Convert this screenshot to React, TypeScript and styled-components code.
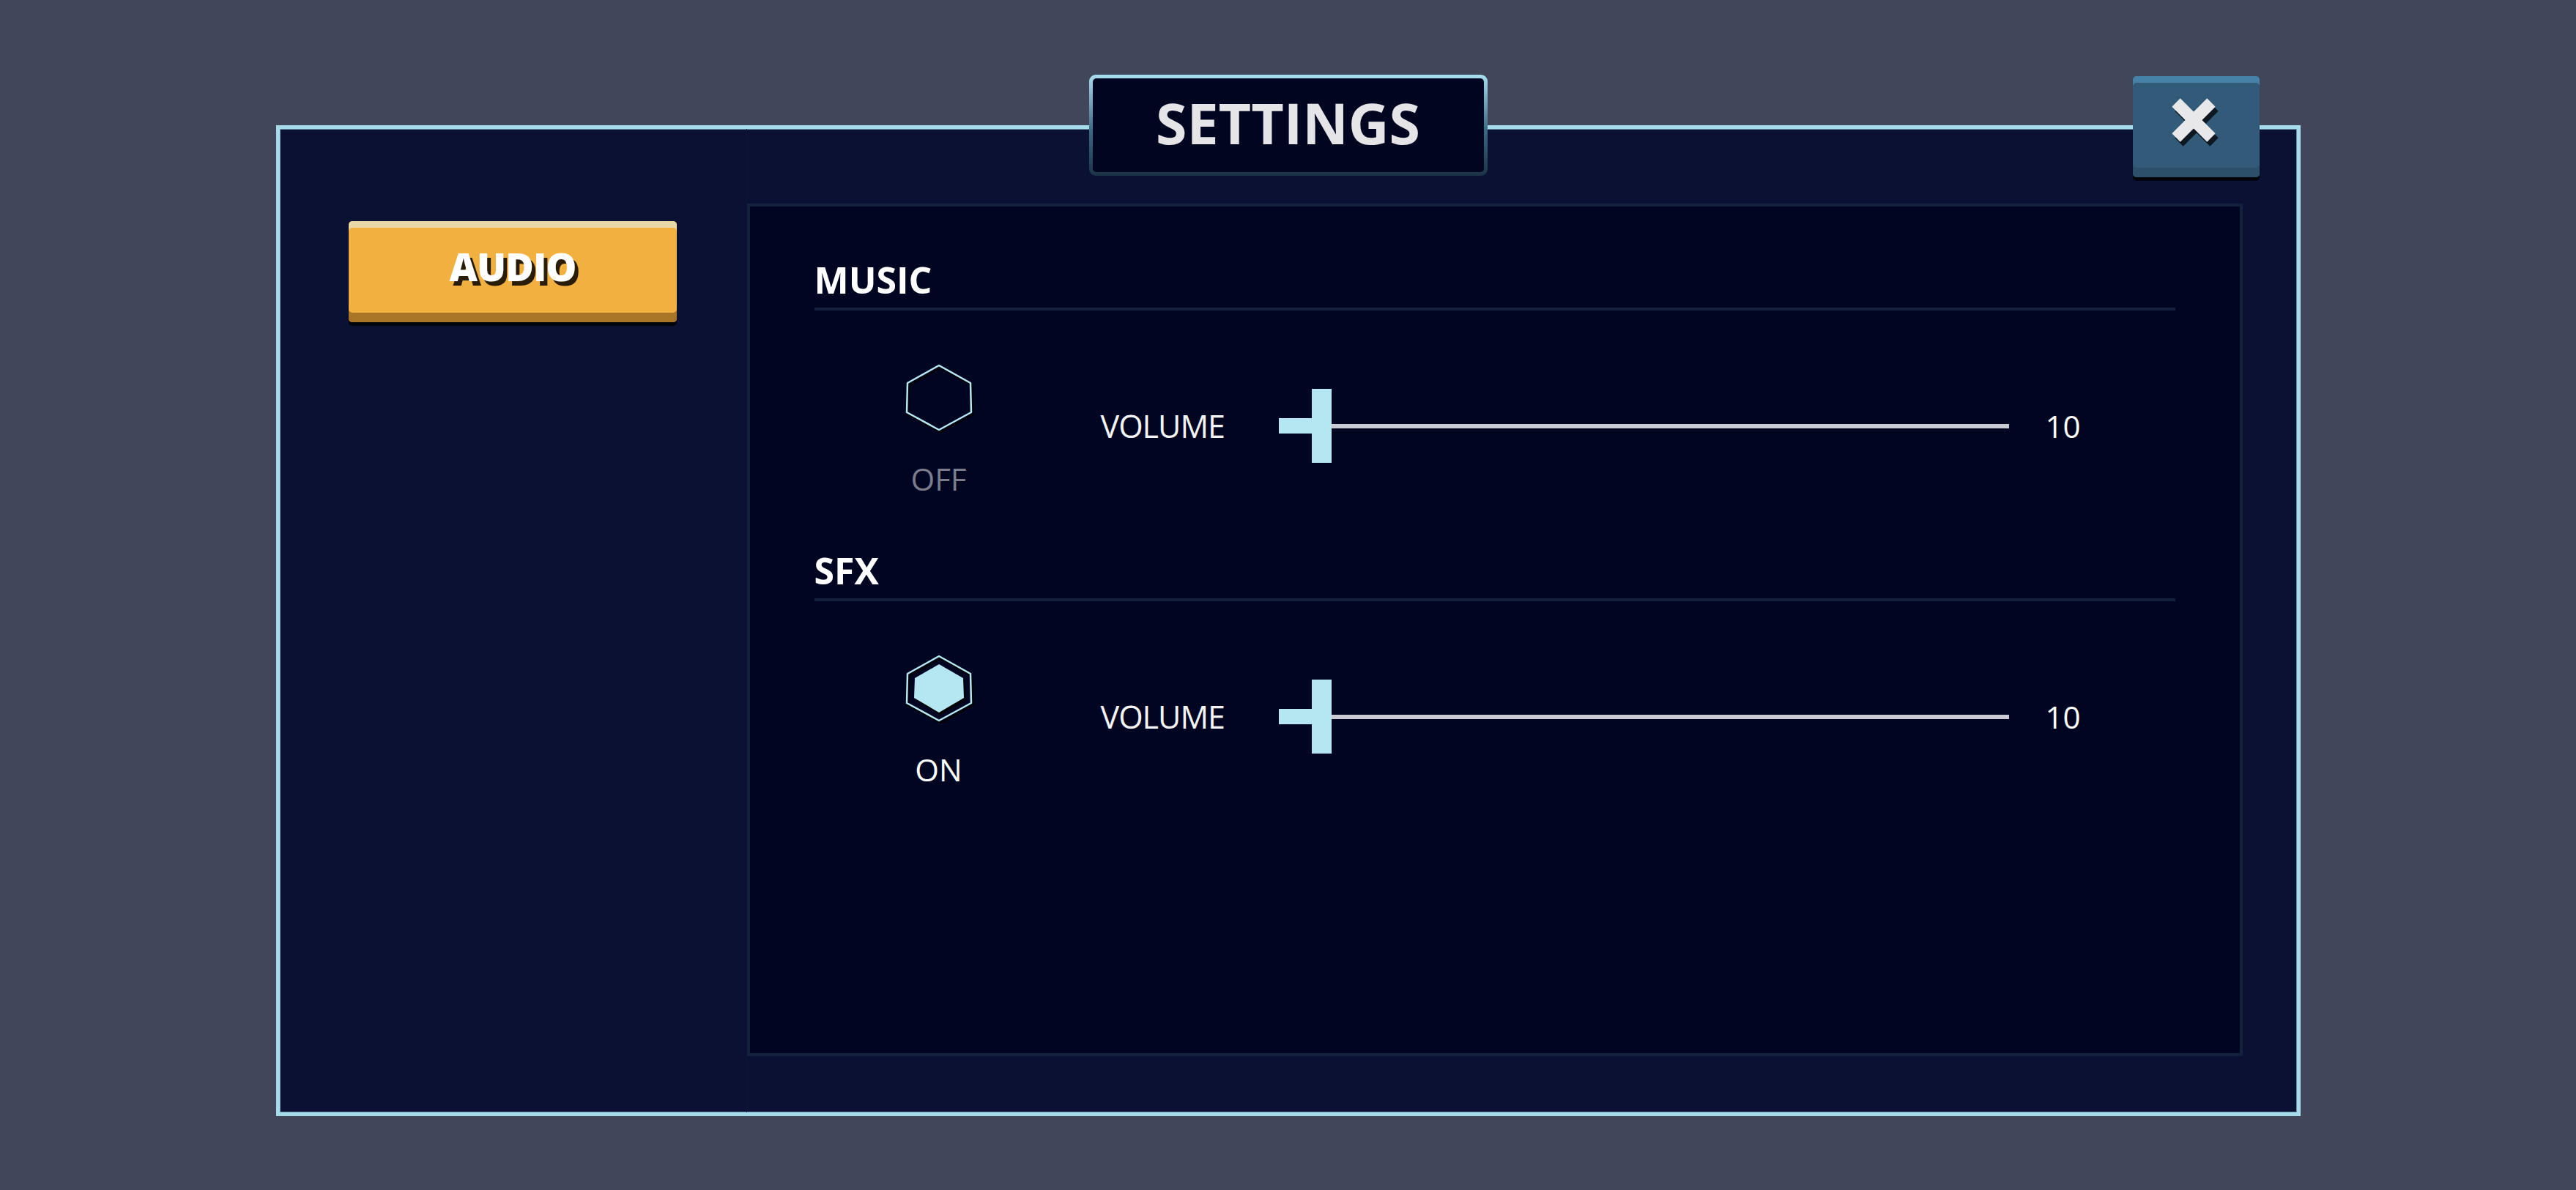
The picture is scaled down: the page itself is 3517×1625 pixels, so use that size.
import styled, { createGlobalStyle } from "styled-components";

const GlobalStyle = createGlobalStyle`
  html, body {
    margin: 0;
    padding: 0;
  }

  body {
    background: #41465b;
    font-family: "Open Sans", "Noto Sans", sans-serif;
  }
`;

const CYAN = "#b4e7f1";

type Tone = "gold" | "steel";

const tones: Record<Tone, { face: string; top: string; bottom: string }> = {
    gold: { face: "#f2b03e", top: "#e9d7a5", bottom: "#a87425" },
    steel: { face: "#325b7a", top: "#4681a7", bottom: "#2c5069" },
};

interface AudioSection {
    title: string;
    on: boolean;
    volume: number;
}

const sections: AudioSection[] = [
    { title: "MUSIC", on: false, volume: 10 },
    { title: "SFX", on: true, volume: 10 },
];

const HexToggle = ({ on }: { on: boolean }) => (
    <HexIcon viewBox="0 0 92 92" width={92} height={92}>
        <polygon
            points="46,2 89,26 90,66 46,90 2,66 3,26"
            fill="none"
            stroke={CYAN}
            strokeWidth={2.5}
            strokeLinejoin="round"
        />
        {on && (
            <polygon
                points="46,13 79,32 80,59 46,79 12,59 13,32"
                fill={CYAN}
            />
        )}
    </HexIcon>
);

const CloseIcon = () => (
    <svg viewBox="0 0 76 76" width={76} height={76}>
        <g stroke="#0e1820" strokeWidth={16}>
            <line x1={15} y1={17} x2={63} y2={65} />
            <line x1={63} y1={17} x2={15} y2={65} />
        </g>
        <g stroke="#e8e8ea" strokeWidth={16}>
            <line x1={11} y1={11} x2={59} y2={59} />
            <line x1={59} y1={11} x2={11} y2={59} />
        </g>
    </svg>
);

const App = () => {
    return (
        <Page>
            <GlobalStyle />
            <Frame>
                <TitleTab>
                    <TitleInner>SETTINGS</TitleInner>
                </TitleTab>
                <CloseButton $tone="steel" aria-label="Close">
                    <CloseIcon />
                </CloseButton>

                <Sidebar>
                    <TabButton $tone="gold">AUDIO</TabButton>
                </Sidebar>

                <Content>
                    <Panel>
                        {sections.map((s) => (
                            <Section key={s.title}>
                                <Heading>{s.title}</Heading>
                                <Row>
                                    <ToggleColumn>
                                        <HexToggle on={s.on} />
                                        <ToggleLabel $on={s.on}>
                                            {s.on ? "ON" : "OFF"}
                                        </ToggleLabel>
                                    </ToggleColumn>
                                    <Controls>
                                        <VolumeLabel>VOLUME</VolumeLabel>
                                        <Slider>
                                            <SliderFill />
                                            <SliderThumb />
                                            <SliderTrack />
                                        </Slider>
                                        <Value>{s.volume}</Value>
                                    </Controls>
                                </Row>
                            </Section>
                        ))}
                    </Panel>
                </Content>
            </Frame>
        </Page>
    );
};

export default App;

const Page = styled.div`
    box-sizing: border-box;
    width: 100%;
    min-height: 100vh;
    padding-top: 171px;
`;

const Frame = styled.div`
    position: relative;
    box-sizing: border-box;
    display: flex;
    width: 2764px;
    height: 1353px;
    margin: 0 auto;
    background: #0b1132;
    border: 5px solid #a6dbea;
    box-shadow: inset 0 0 0 1px #6f93a6;
`;

const TitleTab = styled.div`
    position: absolute;
    top: -74px;
    left: 50%;
    transform: translateX(-50%);
    box-sizing: border-box;
    width: 544px;
    height: 138px;
    padding: 5px;
    border-radius: 9px;
    background: linear-gradient(180deg, #a8def0 0%, #3b6a85 55%, #1b3344 100%);
`;

const TitleInner = styled.div`
    box-sizing: border-box;
    display: flex;
    align-items: center;
    justify-content: center;
    height: 100%;
    padding-bottom: 8px;
    border-radius: 5px;
    background: #000520;
    color: #e5e5e7;
    font-family: "Open Sans", sans-serif;
    font-size: 77px;
    font-weight: 700;
    line-height: 77px;
`;

const GameButton = styled.button<{ $tone: Tone }>`
    box-sizing: border-box;
    display: flex;
    align-items: center;
    justify-content: center;
    padding: 0;
    border: none;
    border-radius: 5px;
    cursor: pointer;
    background: ${({ $tone }) => tones[$tone].face};
    box-shadow:
        inset 0 9px 0 ${({ $tone }) => tones[$tone].top},
        inset 0 -13px 0 ${({ $tone }) => tones[$tone].bottom},
        0 5px 0 #03050c;
`;

const CloseButton = styled(GameButton)`
    position: absolute;
    top: -72px;
    right: 51px;
    width: 173px;
    height: 138px;
    padding-bottom: 13px;
`;

const TabButton = styled(GameButton)`
    width: 448px;
    height: 138px;
    padding-bottom: 16px;
    color: #ffffff;
    font-family: "Open Sans", sans-serif;
    font-size: 53px;
    font-weight: 800;
    line-height: 53px;
    letter-spacing: -1px;
    text-shadow: 5px 6px 0 #2a1d07;
`;

const Sidebar = styled.nav`
    box-sizing: border-box;
    display: flex;
    flex-direction: column;
    align-items: center;
    flex-shrink: 0;
    width: 638px;
    padding-top: 126px;
    border-right: 1px solid #0d1536;
`;

const Content = styled.main`
    display: flex;
    flex: 1;
    padding: 102px 74px 77px 0;
`;

const Panel = styled.section`
    box-sizing: border-box;
    flex: 1;
    padding: 75px 88px 0;
    background: #000622;
    border: 4px solid #14213d;
`;

const Section = styled.div`
    & + & {
        margin-top: 79px;
    }
`;

const Heading = styled.h2`
    margin: 0;
    padding-bottom: 13px;
    border-bottom: 4px solid #14213e;
    color: #ffffff;
    font-family: "Open Sans", sans-serif;
    font-size: 50px;
    font-weight: 700;
    line-height: 50px;
`;

const Row = styled.div`
    display: flex;
    align-items: flex-start;
    padding-top: 73px;
`;

const ToggleColumn = styled.div`
    display: flex;
    flex-direction: column;
    align-items: center;
    gap: 44px;
    width: 92px;
    margin-left: 124px;
`;

const HexIcon = styled.svg`
    display: block;
    overflow: visible;
    filter: drop-shadow(2px 3px 0 #000000);
`;

const ToggleLabel = styled.span<{ $on: boolean }>`
    color: ${({ $on }) => ($on ? "#ffffff" : "#7b7d8d")};
    font-family: "Open Sans", sans-serif;
    font-size: 42px;
    line-height: 42px;
    white-space: nowrap;
`;

const Controls = styled.div`
    display: flex;
    align-items: center;
    height: 101px;
    margin-top: 34px;
    margin-left: 175px;
`;

const VolumeLabel = styled.span`
    width: 243px;
    color: #f4f4f6;
    font-family: "Open Sans", sans-serif;
    font-size: 43px;
    line-height: 43px;
    letter-spacing: -1px;
`;

const Slider = styled.div`
    display: flex;
    align-items: center;
    width: 997px;
    height: 101px;
`;

const SliderFill = styled.div`
    width: 45px;
    height: 21px;
    background: ${CYAN};
`;

const SliderThumb = styled.div`
    width: 27px;
    height: 101px;
    background: ${CYAN};
`;

const SliderTrack = styled.div`
    flex: 1;
    height: 6px;
    background: #c9cad4;
`;

const Value = styled.span`
    margin-left: 50px;
    color: #ffffff;
    font-family: "Open Sans", sans-serif;
    font-size: 42px;
    line-height: 42px;
`;
